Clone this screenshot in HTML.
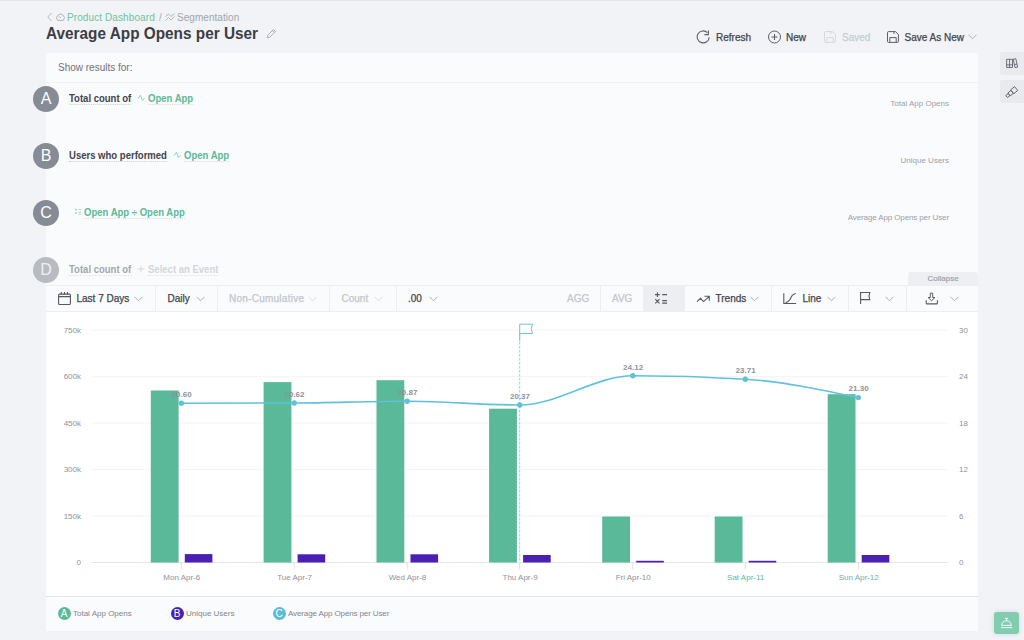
<!DOCTYPE html>
<html><head><meta charset="utf-8">
<style>
*{margin:0;padding:0;box-sizing:border-box}
html,body{width:1024px;height:640px;overflow:hidden;background:#f2f3f6;font-family:"Liberation Sans",sans-serif;color:#3d4049}
.a{position:absolute;white-space:nowrap}
#topline{position:absolute;left:0;top:0;width:1024px;height:1px;background:#e4e6ea}
.crumb{font-size:10px;top:10.5px;line-height:13px;letter-spacing:0.1px}
.title{left:46px;top:23px;font-size:16.5px;font-weight:bold;line-height:20px;color:#3b3e46;transform:scaleX(0.93);transform-origin:0 0}
.btn{font-size:10px;line-height:13px;top:30.5px;color:#41454d;-webkit-text-stroke:0.25px currentColor}
#panel{position:absolute;left:46px;top:53px;width:932px;height:233px;background:#fafbfc}
#sep1{position:absolute;left:46px;top:82px;width:932px;height:1px;background:#eff0f3}
.circ{position:absolute;width:26px;height:26px;border-radius:50%;background:#868b96;color:#fff;font-size:16px;line-height:26px;text-align:center}
.lbl{transform:scaleX(0.925);transform-origin:0 0;font-size:10.3px;font-weight:bold;color:#41444c;line-height:10.5px;border-bottom:1px dotted #c9ccd3}
.ev{transform:scaleX(0.925);transform-origin:0 0;font-size:10.3px;font-weight:bold;color:#5db996;line-height:10.5px;border-bottom:1px dotted #d5dadf}
.rlab{font-size:8px;color:#9a9ea7;line-height:10px;text-align:right}
#toolbar{position:absolute;left:46px;top:285px;width:932px;height:27px;background:#fafbfc;border-top:1px solid #eceef1;border-bottom:1px solid #eceef1}
.div{position:absolute;top:286px;width:1px;height:25px;background:#eceef1}
.tb{font-size:10px;line-height:12px;top:292.5px;color:#41454d;-webkit-text-stroke:0.25px currentColor}
.tbd{color:#c3c6cc}
#chart{position:absolute;left:46px;top:312px;width:932px;height:284px;background:#fff}
#legend{position:absolute;left:46px;top:596px;width:932px;height:35px;background:#fafbfc;border-top:1.5px solid #e3e5e9}
.lg{font-size:8px;color:#80858e;line-height:10px;top:609px}
.lc{position:absolute;width:13px;height:13px;border-radius:50%;color:#fff;font-size:10px;line-height:14px;text-align:center;top:607px}
</style></head><body>
<div id="topline"></div>

<!-- breadcrumb -->
<svg class="a" style="left:46px;top:12px" width="8" height="10" viewBox="0 0 8 10"><path d="M5.6 1 L1.8 5 L5.6 9" fill="none" stroke="#b9bcc3" stroke-width="1"/></svg>
<svg class="a" style="left:55px;top:12px" width="11" height="10" viewBox="0 0 11 10"><path d="M2.6 8.4A3.8 3.8 0 1 1 8.4 8.4z" fill="none" stroke="#a9adb5" stroke-width="0.9"/><path d="M4.2 4.4l1.6 1.6" stroke="#a9adb5" stroke-width="1"/></svg>
<div class="a crumb" style="left:67px;color:#6cc4a1">Product Dashboard</div>
<div class="a crumb" style="left:159px;color:#a8acb3">/</div>
<svg class="a" style="left:165px;top:12px" width="10" height="10" viewBox="0 0 10 10"><path d="M0.5 4.5l3-2.5 2.5 2.5 3.5-3M0.5 8.5l3-3 2.5 2.5 3.5-3.5" fill="none" stroke="#a8acb3" stroke-width="0.9"/></svg>
<div class="a crumb" style="left:177px;color:#a1a5ad;letter-spacing:0.05px">Segmentation</div>
<div class="a title">Average App Opens per User</div>
<svg class="a" style="left:266px;top:28px" width="11" height="11" viewBox="0 0 11 11"><path d="M1.2 9.8l0.6-2.6 5.6-5.6 2 2-5.6 5.6z M6.4 2.6l2 2" fill="none" stroke="#a3a7ae" stroke-width="0.9"/></svg>

<!-- top buttons -->
<svg class="a" style="left:696px;top:29px" width="15" height="15" viewBox="0 0 15 15"><path d="M13.2 8.2A6 6 0 1 1 11.4 3.6" fill="none" stroke="#5a5e67" stroke-width="1.1"/><path d="M12.4 1.6v4h-4" fill="none" stroke="#5a5e67" stroke-width="1.1"/></svg>
<div class="a btn" style="left:716px">Refresh</div>
<svg class="a" style="left:767px;top:30px" width="15" height="15" viewBox="0 0 15 15"><circle cx="7.5" cy="7" r="6" fill="none" stroke="#5a5e67" stroke-width="1"/><path d="M7.5 4v6M4.5 7h6" stroke="#5a5e67" stroke-width="1.1"/></svg>
<div class="a btn" style="left:786px">New</div>
<svg class="a" style="left:824px;top:31px" width="12" height="12" viewBox="0 0 12 12"><path d="M1.5 0.6h7l2.9 2.9v6.9a1 1 0 0 1-1 1H1.5a1 1 0 0 1-1-1V1.6a1 1 0 0 1 1-1z M2.8 11.4V6.6h6.4v4.8 M7 1v2" fill="none" stroke="#d5d8dd" stroke-width="1"/></svg>
<div class="a btn" style="left:842px;color:#c9ccd2">Saved</div>
<svg class="a" style="left:887px;top:31px" width="12" height="12" viewBox="0 0 12 12"><path d="M1.5 0.6h7l2.9 2.9v6.9a1 1 0 0 1-1 1H1.5a1 1 0 0 1-1-1V1.6a1 1 0 0 1 1-1z M2.8 11.4V6.6h6.4v4.8 M7 1v2" fill="none" stroke="#5a5e67" stroke-width="1"/></svg>
<div class="a btn" style="left:904.5px">Save As New</div>
<svg class="a" style="left:968px;top:34px" width="9" height="6" viewBox="0 0 9 6"><path d="M0.5 0.8l4 4 4-4" fill="none" stroke="#a4a8af" stroke-width="0.9"/></svg>

<!-- right side buttons -->
<div class="a" style="left:1000px;top:52px;width:24px;height:22.5px;background:#e8eaee;border-radius:3px 0 0 3px"></div>
<svg class="a" style="left:1000px;top:52px" width="24" height="22" viewBox="1000 52 24 22"><path d="M1006.6 59.3h5.9v8.2h-5.9z M1009.55 59.3v8.2 M1006.6 64.9h5.9 M1013.2 59.2l2.6-0.5 1.8 8.4-2.6 0.5z M1014.2 64.6l2.6-0.5" fill="none" stroke="#5f636b" stroke-width="0.9"/></svg>
<div class="a" style="left:1000px;top:80px;width:24px;height:22.5px;background:#e8eaee;border-radius:3px 0 0 3px"></div>
<svg class="a" style="left:1000px;top:80px" width="24" height="22" viewBox="1000 80 24 22"><g transform="translate(1012 92) rotate(-40)" fill="none" stroke="#5f636b" stroke-width="0.9"><rect x="-7" y="-1.3" width="3.2" height="2.6"/><rect x="-3.8" y="-1.9" width="4" height="3.8"/><rect x="0.2" y="-2.5" width="5.2" height="5"/></g></svg>

<!-- panel -->
<div id="panel"></div>
<div class="a" style="left:58px;top:62px;font-size:10px;line-height:12px;color:#6f737c">Show results for:</div>
<div id="sep1"></div>

<div class="circ" style="left:33px;top:86px">A</div>
<div class="a lbl" style="left:69px;top:93.5px">Total count of</div>
<svg class="a" style="left:137px;top:94px" width="9" height="8" viewBox="0 0 9 8"><path d="M0.9 4.5L3.5 1.2 5.4 6.6 7.7 4.3" fill="none" stroke="#8dd3bd" stroke-width="1"/></svg>
<div class="a ev" style="left:148px;top:93.5px">Open App</div>
<div class="a rlab" style="right:75px;top:99px">Total App Opens</div>

<div class="circ" style="left:33px;top:143px">B</div>
<div class="a lbl" style="left:69px;top:150.5px">Users who performed</div>
<svg class="a" style="left:173px;top:151px" width="9" height="8" viewBox="0 0 9 8"><path d="M0.9 4.5L3.5 1.2 5.4 6.6 7.7 4.3" fill="none" stroke="#8dd3bd" stroke-width="1"/></svg>
<div class="a ev" style="left:184px;top:150.5px">Open App</div>
<div class="a rlab" style="right:75px;top:156px">Unique Users</div>

<div class="circ" style="left:33px;top:200px">C</div>
<svg class="a" style="left:74px;top:208px" width="9" height="8" viewBox="0 0 9 8"><path d="M0.8 1.6h2.2M1.9 0.6v2M4.6 1.6h2.6M0.9 4.2l2 2M2.9 4.2l-2 2M4.6 4.5h2.6M4.6 6.3h2.6" stroke="#9ad8c6" stroke-width="0.9"/></svg>
<div class="a ev" style="left:84px;top:207.5px">Open App ÷ Open App</div>
<div class="a rlab" style="right:75px;top:213px;letter-spacing:-0.12px">Average App Opens per User</div>

<div class="circ" style="left:33px;top:256.5px;background:#b8bbc2;color:#eef0f3">D</div>
<div class="a lbl" style="left:69px;top:264.5px;color:#a3a7ae;border-bottom-color:#dcdee2">Total count of</div>
<svg class="a" style="left:137px;top:265px" width="8" height="8" viewBox="0 0 8 8"><path d="M4 0.5v7M0.5 4h7" stroke="#d3d6db" stroke-width="0.9"/></svg>
<div class="a ev" style="left:148px;top:264.5px;color:#d3d6db;border-bottom-color:#dfe1e5">Select an Event</div>

<div class="a" style="left:907.5px;top:271.5px;width:70.5px;height:14px;background:#edeff2;border-radius:3px 3px 0 0"></div>
<div class="a" style="left:927.5px;top:272.5px;font-size:8px;line-height:11px;color:#9a9ea6;-webkit-text-stroke:0.15px currentColor">Collapse</div>

<!-- toolbar -->
<div id="toolbar"></div>
<div class="div" style="left:155px"></div>
<div class="div" style="left:217px"></div>
<div class="div" style="left:329px"></div>
<div class="div" style="left:396px"></div>
<div class="div" style="left:600px"></div>
<div class="a" style="left:643px;top:286px;width:42px;height:25px;background:#eceef1"></div>
<div class="div" style="left:771px"></div>
<div class="div" style="left:848px"></div>
<div class="div" style="left:906px"></div>

<svg class="a" style="left:56px;top:290px" width="17" height="17" viewBox="56 290 17 17"><rect x="58.6" y="294.1" width="11.8" height="10.4" rx="1" fill="none" stroke="#555962" stroke-width="1.1"/><path d="M58.6 296.6h11.8M61.3 292v2.5M64.5 292v2.5M67.5 292v2.5" stroke="#555962" stroke-width="1.1"/></svg>
<div class="a tb" style="left:76.5px">Last 7 Days</div>
<svg class="a" style="left:133.5px;top:296px" width="9" height="6" viewBox="0 0 9 6"><path d="M0.5 0.8l4 4 4-4" fill="none" stroke="#a4a8af" stroke-width="0.9"/></svg>
<div class="a tb" style="left:167.5px">Daily</div>
<svg class="a" style="left:195.5px;top:296px" width="9" height="6" viewBox="0 0 9 6"><path d="M0.5 0.8l4 4 4-4" fill="none" stroke="#a4a8af" stroke-width="0.9"/></svg>
<div class="a tb tbd" style="left:229px;letter-spacing:0.25px">Non-Cumulative</div>
<svg class="a" style="left:308px;top:296px" width="9" height="6" viewBox="0 0 9 6"><path d="M0.5 0.8l4 4 4-4" fill="none" stroke="#d5d8dd" stroke-width="0.9"/></svg>
<div class="a tb tbd" style="left:341.5px">Count</div>
<svg class="a" style="left:374px;top:296px" width="9" height="6" viewBox="0 0 9 6"><path d="M0.5 0.8l4 4 4-4" fill="none" stroke="#d5d8dd" stroke-width="0.9"/></svg>
<div class="a tb" style="left:408px">.00</div>
<svg class="a" style="left:429px;top:296px" width="9" height="6" viewBox="0 0 9 6"><path d="M0.5 0.8l4 4 4-4" fill="none" stroke="#a4a8af" stroke-width="0.9"/></svg>
<div class="a tb tbd" style="left:567px">AGG</div>
<div class="a tb tbd" style="left:612px">AVG</div>
<svg class="a" style="left:650px;top:288px" width="24" height="20" viewBox="650 288 24 20"><path d="M655 294.6h4.8M657.4 292.2v4.7M662.2 294.6h4.8M655.3 299.2l4.2 4.2M659.5 299.2l-4.2 4.2M662.2 300.6h4.8M662.2 303.1h4.8" stroke="#555962" stroke-width="1.1"/></svg>
<svg class="a" style="left:694px;top:290px" width="18" height="14" viewBox="694 290 18 14"><path d="M697 301.6l3.4-3.3 3.2 3.3 5.7-5.3M704.5 296.3h4.8v4.5" fill="none" stroke="#555962" stroke-width="1.1"/></svg>
<div class="a tb" style="left:715.5px">Trends</div>
<svg class="a" style="left:750px;top:296px" width="9" height="6" viewBox="0 0 9 6"><path d="M0.5 0.8l4 4 4-4" fill="none" stroke="#a4a8af" stroke-width="0.9"/></svg>
<svg class="a" style="left:780px;top:290px" width="20" height="17" viewBox="780 290 20 17"><path d="M783.8 293.2v10.3h12.3" fill="none" stroke="#555962" stroke-width="1.1"/><path d="M785.5 302.7C787.5 302.2 788.8 301.5 790 299.5S791.5 294 795.8 293.5" fill="none" stroke="#555962" stroke-width="1.1"/></svg>
<div class="a tb" style="left:802.5px">Line</div>
<svg class="a" style="left:827px;top:296px" width="9" height="6" viewBox="0 0 9 6"><path d="M0.5 0.8l4 4 4-4" fill="none" stroke="#a4a8af" stroke-width="0.9"/></svg>
<svg class="a" style="left:857px;top:290px" width="16" height="16" viewBox="857 290 16 16"><path d="M860.6 304V292.5h9.2q-1.6 3.5 0 7.1h-9.2" fill="none" stroke="#555962" stroke-width="1.1"/></svg>
<svg class="a" style="left:884.5px;top:296px" width="9" height="6" viewBox="0 0 9 6"><path d="M0.5 0.8l4 4 4-4" fill="none" stroke="#a4a8af" stroke-width="0.9"/></svg>
<svg class="a" style="left:923px;top:290px" width="18" height="16" viewBox="923 290 18 16"><path d="M930.3 293.2h2.4v4.3h2.2l-3.4 3.3-3.4-3.3h2.2z" fill="none" stroke="#555962" stroke-width="1"/><path d="M926.2 300.3v2.6q0 1 1 1h9.2q1 0 1-1v-2.6" fill="none" stroke="#555962" stroke-width="1.1"/></svg>
<svg class="a" style="left:949.5px;top:296px" width="9" height="6" viewBox="0 0 9 6"><path d="M0.5 0.8l4 4 4-4" fill="none" stroke="#a4a8af" stroke-width="0.9"/></svg>

<!-- chart -->
<div id="chart"></div>
<svg class="a" style="left:0;top:0" width="1024" height="640" viewBox="0 0 1024 640">
<g stroke="#f2f3f5" stroke-width="1">
<line x1="91.5" y1="330.20" x2="948.2" y2="330.20"/>
<line x1="91.5" y1="376.66" x2="948.2" y2="376.66"/>
<line x1="91.5" y1="423.12" x2="948.2" y2="423.12"/>
<line x1="91.5" y1="469.58" x2="948.2" y2="469.58"/>
<line x1="91.5" y1="516.04" x2="948.2" y2="516.04"/>
</g>
<line x1="91.5" y1="562.5" x2="948.2" y2="562.5" stroke="#e1e5ec" stroke-width="1"/>
<g font-family="Liberation Sans" font-size="8" fill="#8e929b">
<text x="81" y="333.00" text-anchor="end">750k</text><text x="959" y="333.00">30</text>
<text x="81" y="379.46" text-anchor="end">600k</text><text x="959" y="379.46">24</text>
<text x="81" y="425.92" text-anchor="end">450k</text><text x="959" y="425.92">18</text>
<text x="81" y="472.38" text-anchor="end">300k</text><text x="959" y="472.38">12</text>
<text x="81" y="518.84" text-anchor="end">150k</text><text x="959" y="518.84">6</text>
<text x="81" y="565.30" text-anchor="end">0</text><text x="959" y="565.30">0</text>
</g>
<g fill="#59b998">
<rect x="150.80" y="390.5" width="27.8" height="172.00"/>
<rect x="263.60" y="382.1" width="27.8" height="180.40"/>
<rect x="376.50" y="380.2" width="27.8" height="182.30"/>
<rect x="489.10" y="408.7" width="27.8" height="153.80"/>
<rect x="602.20" y="516.5" width="27.8" height="46.00"/>
<rect x="714.70" y="516.5" width="27.8" height="46.00"/>
<rect x="827.70" y="394.2" width="27.8" height="168.30"/>
</g><g fill="#4b1fb3">
<rect x="184.80" y="554.1" width="27.6" height="8.40"/>
<rect x="297.60" y="554.3" width="27.6" height="8.20"/>
<rect x="410.50" y="554.3" width="27.6" height="8.20"/>
<rect x="523.10" y="555.0" width="27.6" height="7.50"/>
<rect x="636.20" y="560.8" width="27.6" height="1.70"/>
<rect x="748.70" y="560.8" width="27.6" height="1.70"/>
<rect x="861.70" y="555.0" width="27.6" height="7.50"/>
</g>
<g stroke="#dde0e6" stroke-width="1">
<line x1="181.4" y1="562.5" x2="181.4" y2="569.5"/>
<line x1="294.2" y1="562.5" x2="294.2" y2="569.5"/>
<line x1="407.1" y1="562.5" x2="407.1" y2="569.5"/>
<line x1="519.7" y1="562.5" x2="519.7" y2="569.5"/>
<line x1="632.8" y1="562.5" x2="632.8" y2="569.5"/>
<line x1="745.3" y1="562.5" x2="745.3" y2="569.5"/>
<line x1="858.3" y1="562.5" x2="858.3" y2="569.5"/>
</g>
<g font-family="Liberation Sans" font-size="8" text-anchor="middle">
<text x="181.8" y="580.4" fill="#8e929b">Mon Apr-6</text>
<text x="294.6" y="580.4" fill="#8e929b">Tue Apr-7</text>
<text x="407.5" y="580.4" fill="#8e929b">Wed Apr-8</text>
<text x="520.1" y="580.4" fill="#8e929b">Thu Apr-9</text>
<text x="633.2" y="580.4" fill="#8e929b">Fri Apr-10</text>
<text x="745.7" y="580.4" fill="#5fb5ad">Sat Apr-11</text>
<text x="858.7" y="580.4" fill="#5fb5ad">Sun Apr-12</text>
</g>
<line x1="519.7" y1="334" x2="519.7" y2="562" stroke="#6cc6de" stroke-width="0.8" stroke-dasharray="2.5 1.5"/>
<path d="M519.7 341V324.2h12.8q-2.6 4.6 0 9.3h-12.8" fill="#fff" stroke="#6cc6de" stroke-width="1"/>
<path d="M181.4 403.2 C219.00 403.17 256.60 403.13 294.2 403.0 C331.83 402.87 369.47 401.20 407.1 401.2 C444.63 401.20 482.17 405.00 519.7 405.0 C557.40 405.00 595.10 375.80 632.8 375.8 C670.30 375.80 707.80 376.93 745.3 379.2 C782.97 381.48 820.63 389.54 858.3 397.6" fill="none" stroke="#5fc2dd" stroke-width="1.6"/>
<g fill="#5fc2dd">
<circle cx="181.4" cy="403.2" r="2.7"/>
<circle cx="294.2" cy="403.0" r="2.7"/>
<circle cx="407.1" cy="401.2" r="2.7"/>
<circle cx="519.7" cy="405.0" r="2.7"/>
<circle cx="632.8" cy="375.8" r="2.7"/>
<circle cx="745.3" cy="379.2" r="2.7"/>
<circle cx="858.3" cy="397.6" r="2.7"/>
</g>
<g font-family="Liberation Sans" font-size="8" font-weight="bold" fill="#8e929b" text-anchor="middle">
<text x="181.7" y="397.0">20.60</text>
<text x="294.5" y="396.8">20.62</text>
<text x="407.4" y="395.0">20.87</text>
<text x="520.0" y="398.8">20.37</text>
<text x="633.1" y="369.6">24.12</text>
<text x="745.6" y="373.0">23.71</text>
<text x="858.6" y="391.4">21.30</text>
</g>
</svg>

<!-- legend -->
<div id="legend"></div>
<div class="lc" style="left:57.5px;background:#59b998">A</div>
<div class="a lg" style="left:73px">Total App Opens</div>
<div class="lc" style="left:170.5px;background:#4b1fb3">B</div>
<div class="a lg" style="left:186px">Unique Users</div>
<div class="lc" style="left:272.5px;background:#5bbcd6">C</div>
<div class="a lg" style="left:288px;letter-spacing:-0.12px">Average App Opens per User</div>

<!-- bell -->
<div class="a" style="left:994px;top:612px;width:24.5px;height:22px;background:#82ccb1;border-radius:3px;box-shadow:0 0 4px rgba(120,130,150,0.25)"></div>
<svg class="a" style="left:998px;top:615px" width="17" height="15" viewBox="998 615 17 15"><path d="M1001.6 625.4a4.9 4.6 0 0 1 9.8 0z M1001 627.6h11 M1006.5 618.6v2.2 M1005 618.4h3" fill="none" stroke="#fff" stroke-width="0.9"/></svg>
</body></html>
